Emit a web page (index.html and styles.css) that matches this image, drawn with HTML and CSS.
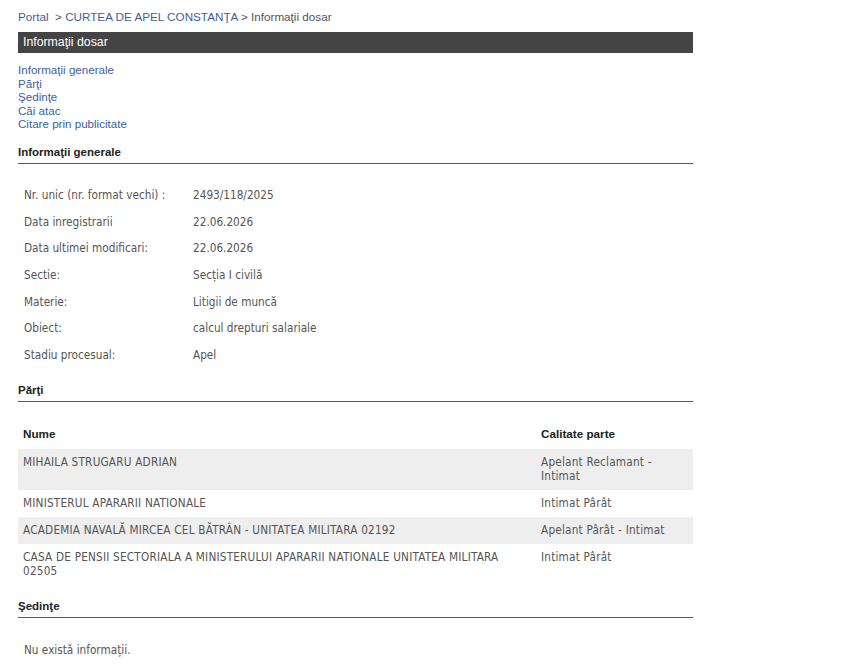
FILE: index.html
```html
<!DOCTYPE html>
<html>
<head>
    <title>Informaţii dosar</title>
    <link rel="stylesheet" href="styles.css">
</head>
<body>
    <div class="page">
        <div class="breadcrumb">
            <a href="#">Portal</a>&nbsp; &gt; <a href="#">CURTEA DE APEL CONSTANŢA</a> &gt; Informaţii dosar
        </div>

        <div class="title-bar">Informaţii dosar</div>

        <ul class="toc">
            <li><a href="#generale">Informaţii generale</a></li>
            <li><a href="#parti">Părţi</a></li>
            <li><a href="#sedinte">Şedinţe</a></li>
            <li><a href="#cai">Căi atac</a></li>
            <li><a href="#citare">Citare prin publicitate</a></li>
        </ul>

        <h3 class="section" id="generale">Informaţii generale</h3>
        <table class="info">
            <tr><td class="lbl">Nr. unic (nr. format vechi) :</td><td>2493/118/2025</td></tr>
            <tr><td class="lbl">Data inregistrarii</td><td>22.06.2026</td></tr>
            <tr><td class="lbl">Data ultimei modificari:</td><td>22.06.2026</td></tr>
            <tr><td class="lbl">Sectie:</td><td>Secția I civilă</td></tr>
            <tr><td class="lbl">Materie:</td><td>Litigii de muncă</td></tr>
            <tr><td class="lbl">Obiect:</td><td>calcul drepturi salariale</td></tr>
            <tr><td class="lbl">Stadiu procesual:</td><td>Apel</td></tr>
        </table>

        <h3 class="section" id="parti">Părţi</h3>
        <table class="parties">
            <thead>
                <tr><th class="col-name">Nume</th><th class="col-role">Calitate parte</th></tr>
            </thead>
            <tbody>
                <tr class="alt"><td>MIHAILA STRUGARU ADRIAN</td><td>Apelant Reclamant - Intimat</td></tr>
                <tr><td>MINISTERUL APARARII NATIONALE</td><td>Intimat Pârât</td></tr>
                <tr class="alt"><td>ACADEMIA NAVALĂ MIRCEA CEL BĂTRÂN - UNITATEA MILITARA 02192</td><td>Apelant Pârât - Intimat</td></tr>
                <tr><td>CASA DE PENSII SECTORIALA A MINISTERULUI APARARII NATIONALE UNITATEA MILITARA 02505</td><td>Intimat Pârât</td></tr>
            </tbody>
        </table>

        <h3 class="section" id="sedinte">Şedinţe</h3>
        <p class="empty">Nu există informații.</p>
    </div>
</body>
</html>
```

FILE: styles.css
```css
body {
    margin: 0;
    background-color: #fff;
    font-family: 'Liberation Sans', Arial, sans-serif;
    font-size: 12px;
    color: #333;
}

.page {
    width: 675px;
    padding: 9px 0 0 18px;
}

a {
    color: #3d5f9e;
    text-decoration: none;
}

.breadcrumb {
    color: #555;
    font-size: 11.7px;
    line-height: 16px;
}

.title-bar {
    margin-top: 7px;
    height: 21px;
    line-height: 21px;
    padding-left: 5px;
    background-color: #444;
    color: #fff;
    font-size: 12.3px;
}

.toc {
    list-style: none;
    margin: 10px 0 0 0;
    padding: 0;
    font-size: 11.6px;
}

.toc li {
    line-height: 13.5px;
}

.section {
    margin: 0;
    font-size: 11.5px;
    font-weight: bold;
    color: #222;
    border-bottom: 1px solid #555;
    padding-bottom: 4px;
    line-height: 14px;
}

.toc + .section {
    margin-top: 14px;
}

.info {
    border-collapse: collapse;
    margin: 18px 0 15px 0;
    font-family: 'DejaVu Sans Condensed', 'DejaVu Sans', sans-serif;
    font-size: 11.7px;
    color: #555;
}

.info td {
    height: 26.7px;
    padding: 0 0 0 6px;
    vertical-align: middle;
}

.info td.lbl {
    width: 163px;
}

.parties {
    width: 100%;
    border-collapse: collapse;
    margin: 18px 0 14px 0;
    font-family: 'DejaVu Sans Condensed', 'DejaVu Sans', sans-serif;
    font-size: 11.7px;
    color: #555;
}

.parties th {
    text-align: left;
    font-family: 'Liberation Sans', Arial, sans-serif;
    font-size: 11.7px;
    color: #222;
    padding: 7px 5px 9px 5px;
}

.parties td {
    padding: 6px 5px 7px 5px;
    vertical-align: top;
    line-height: 14px;
    letter-spacing: 0.2px;
}

.parties .col-role {
    width: 140px;
    padding-right: 12px;
}

.parties tr.alt td {
    background-color: #eee;
}

.empty {
    margin: 25px 0 0 6px;
    font-family: 'DejaVu Sans Condensed', 'DejaVu Sans', sans-serif;
    font-size: 11.7px;
    color: #555;
}
```
